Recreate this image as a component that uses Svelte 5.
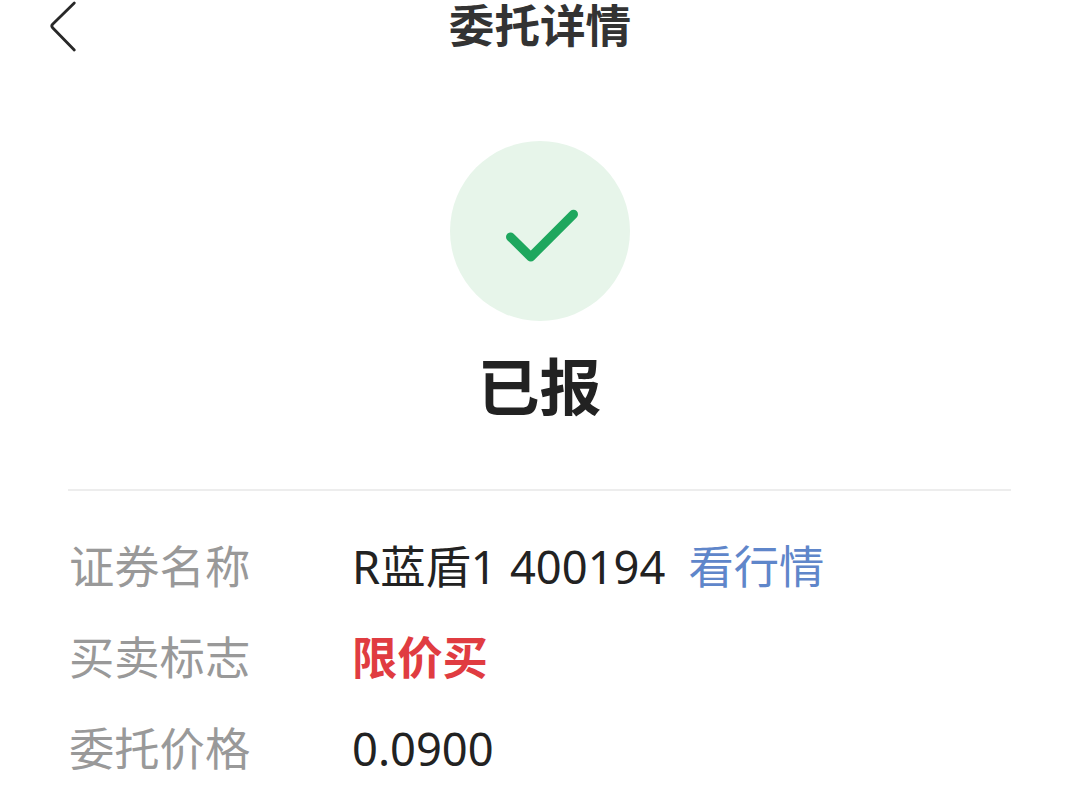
<script lang="ts">
	type Row = { label: string; value: string; kind?: 'buy'; link?: string };

	const rows: Row[] = [
		{ label: '证券名称', value: 'R蓝盾1 400194', link: '看行情' },
		{ label: '买卖标志', value: '限价买', kind: 'buy' },
		{ label: '委托价格', value: '0.0900' }
	];
</script>

<div class="page">
	<header>
		<button class="back" aria-label="返回">
			<svg width="30" height="54" viewBox="0 0 30 54">
				<path d="M26.3 3 L4.6 24.3 Q3 26 4.6 27.7 L26.3 50" />
			</svg>
		</button>
		<h1>委托详情</h1>
	</header>

	<section class="status">
		<div class="badge">
			<svg width="180" height="180" viewBox="0 0 180 180">
				<path d="M60.5 96 L80.8 116 L123.5 73.2" />
			</svg>
		</div>
		<h2>已报</h2>
	</section>

	<dl>
		{#each rows as row}
			<div class="row">
				<dt>{row.label}</dt>
				<dd class:buy={row.kind === 'buy'}>
					<span>{row.value}</span>
					{#if row.link}
						<a href="#quote">{row.link}</a>
					{/if}
				</dd>
			</div>
		{/each}
	</dl>
</div>

<style>
	:global(body) {
		background: #fff;
	}
	.page {
		height: 785px;
		overflow: hidden;
		box-sizing: border-box;
		background: #fff;
		color: #222;
		font-family: 'Noto Sans', 'Noto Sans CJK SC', sans-serif;
	}
	header {
		display: grid;
		grid-template-columns: 140px 1fr 140px;
		height: 54px;
	}
	.back {
		display: flex;
		padding: 0 0 0 48px;
		border: 0;
		background: none;
	}
	.back path {
		fill: none;
		stroke: #282828;
		stroke-width: 2.8;
		stroke-linecap: round;
		stroke-linejoin: round;
	}
	h1 {
		margin: 0;
		text-align: center;
		font-family: Inter, 'Noto Sans CJK SC', sans-serif;
		font-size: 45.6px;
		line-height: 54px;
		font-weight: 700;
		color: #333;
	}
	.status {
		display: flex;
		flex-direction: column;
		align-items: center;
		height: 348px;
		margin: 0 69px 0 68px;
		padding-top: 87px;
		border-bottom: 2px solid #ededed;
	}
	.badge {
		width: 180px;
		height: 180px;
		border-radius: 50%;
		background: #e7f5ea;
	}
	.badge path {
		fill: none;
		stroke: #1ea75e;
		stroke-width: 9;
		stroke-linecap: round;
		stroke-linejoin: round;
	}
	h2 {
		margin: 26px 0 0;
		font-size: 62px;
		line-height: 80px;
		font-weight: 700;
		color: #222;
	}
	dl {
		margin: 0;
		padding: 30px 69px 0;
	}
	.row {
		display: grid;
		grid-template-columns: 283px 1fr;
		height: 91px;
		font-size: 45.3px;
		line-height: 91px;
		white-space: nowrap;
	}
	dt {
		color: #999;
	}
	dd {
		display: flex;
		gap: 23px;
		margin: 0;
		word-spacing: 1.5px;
	}
	.buy {
		color: #e03c41;
		font-weight: 700;
	}
	a {
		color: #5f86ca;
		text-decoration: none;
	}
</style>
